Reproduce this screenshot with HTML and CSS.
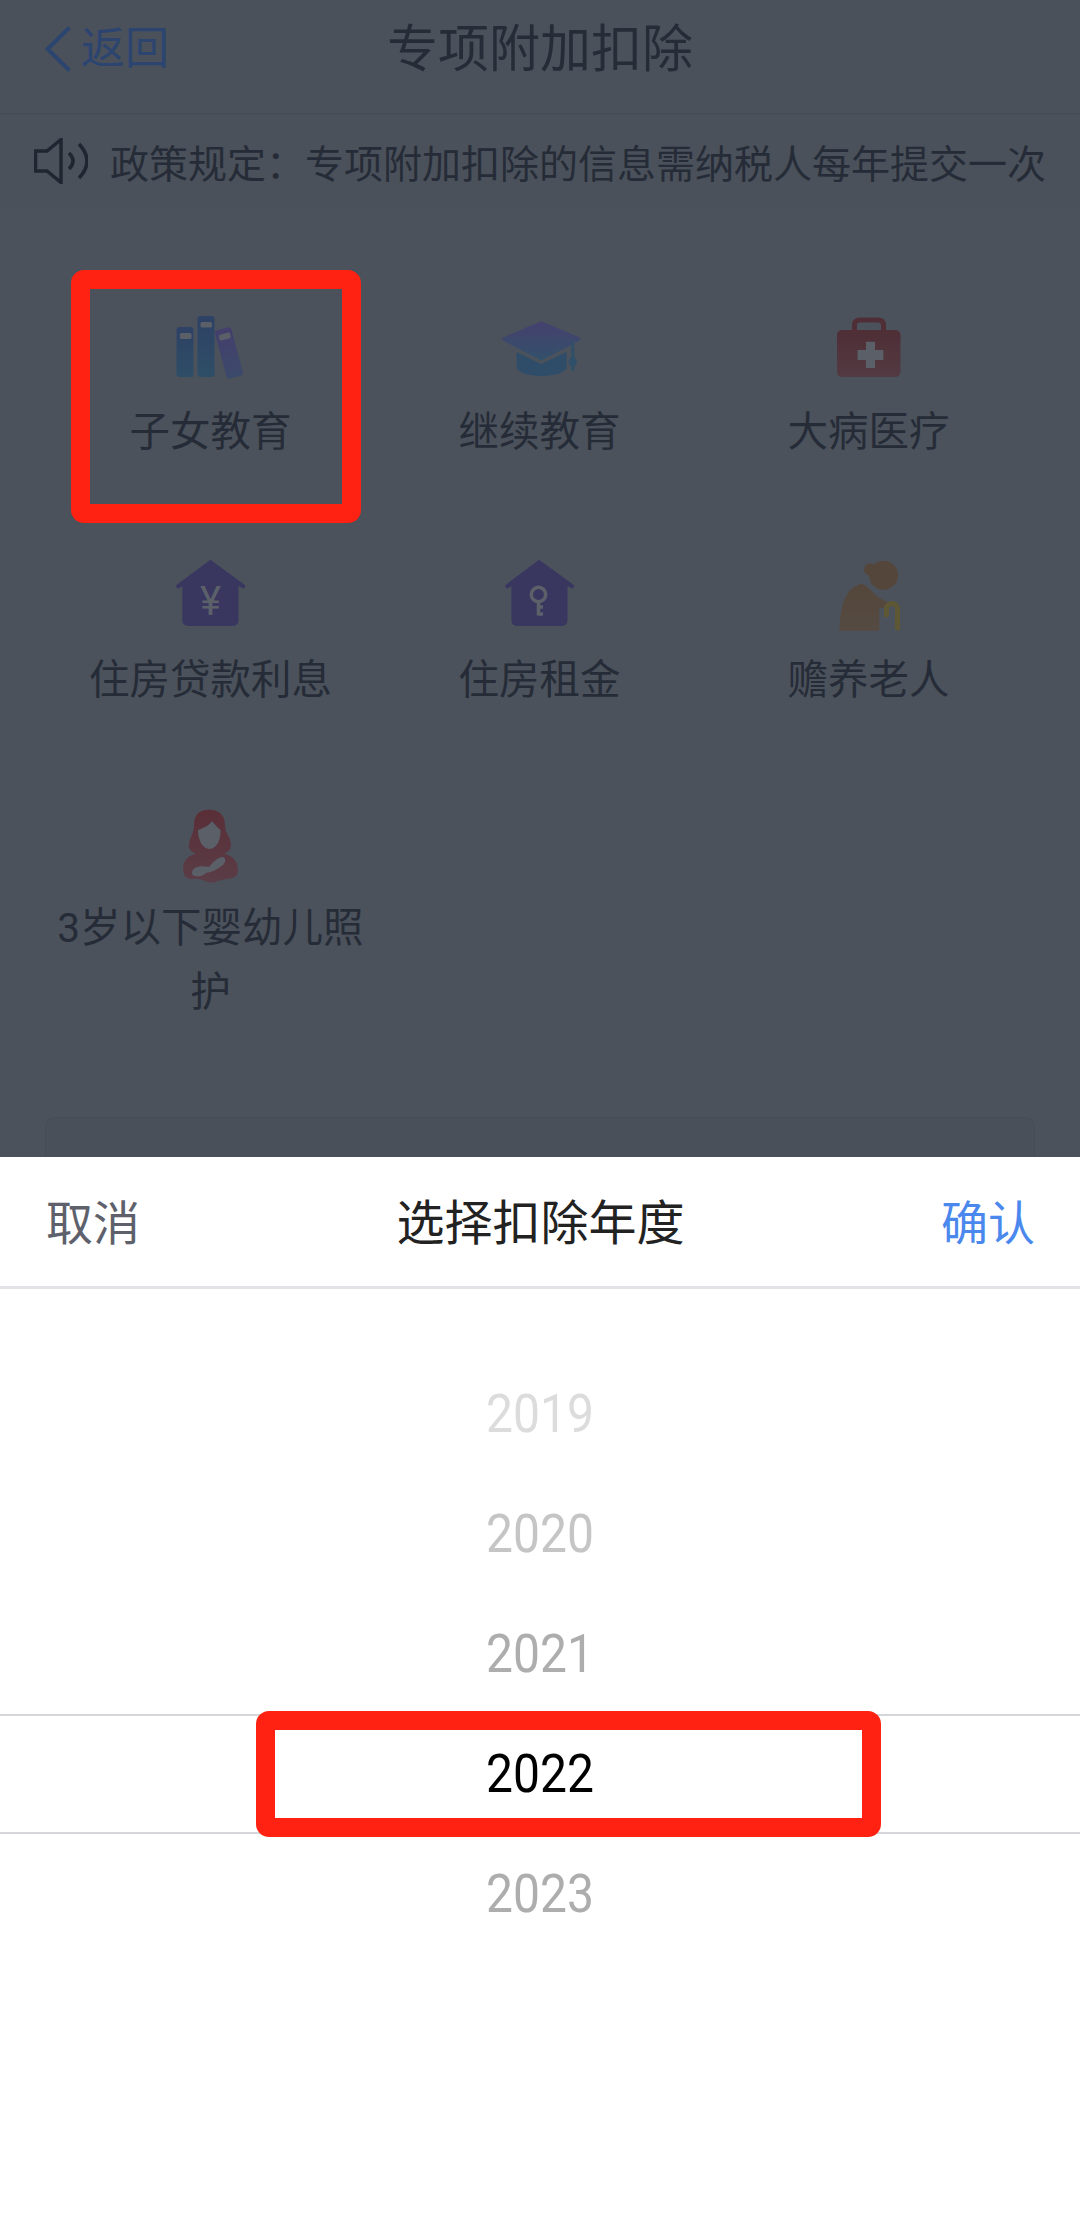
FILE: index.html
```html
<!DOCTYPE html>
<html lang="zh-CN">

<head>
    <meta charset="UTF-8">
    <meta name="viewport" content="width=device-width, initial-scale=1.0">
    <title>专项附加扣除</title>
    <link rel="stylesheet" href="styles.css">
</head>

<body>
    <div class="page">
        <div class="nav-bar">
            <div class="back">
                <svg class="back-icon" viewBox="0 0 26 46"><path d="M24.5 1.5 L2.5 23 L24.5 44.5"/></svg>
                <span>返回</span>
            </div>
            <div class="nav-title">专项附加扣除</div>
        </div>

        <div class="notice">
            <svg class="notice-icon" viewBox="0 0 54 46">
                <path d="M1.5 13 H13 L27 1.5 V44.5 L13 33 H1.5 Z"/>
                <path d="M35 15 Q43 23 35 31"/>
                <path d="M45 6 Q61 23 45 40"/>
            </svg>
            <span>政策规定：专项附加扣除的信息需纳税人每年提交一次</span>
        </div>

        <div class="item-grid">
            <div class="item">
                <svg class="item-icon" viewBox="0 0 84 76">
                    <defs>
                        <linearGradient id="blueGrad" x1="0" y1="0" x2="0" y2="1">
                            <stop offset="0" stop-color="#2e4166"/>
                            <stop offset="1" stop-color="#2e4e66"/>
                        </linearGradient>
                        <linearGradient id="purpleGrad" x1="0" y1="0" x2="0" y2="1">
                            <stop offset="0" stop-color="#443e6c"/>
                            <stop offset="1" stop-color="#3c4a6a"/>
                        </linearGradient>
                        <linearGradient id="capGrad" x1="0" y1="0" x2="0" y2="1">
                            <stop offset="0" stop-color="#46406f"/>
                            <stop offset="1" stop-color="#33516a"/>
                        </linearGradient>
                        <linearGradient id="redGrad" x1="0" y1="0" x2="0" y2="1">
                            <stop offset="0" stop-color="#4f2e36"/>
                            <stop offset="1" stop-color="#533a42"/>
                        </linearGradient>
                        <linearGradient id="momGrad" x1="0" y1="0" x2="0" y2="1">
                            <stop offset="0" stop-color="#5a2e37"/>
                            <stop offset="1" stop-color="#5a3d47"/>
                        </linearGradient>
                        <linearGradient id="brownGrad" x1="0" y1="0" x2="0" y2="1">
                            <stop offset="0" stop-color="#54463a"/>
                            <stop offset="1" stop-color="#554b43"/>
                        </linearGradient>
                    </defs>
                    <rect x="8.5" y="18" width="17" height="50" rx="3" fill="url(#blueGrad)"/>
                    <rect x="12" y="24" width="11.500" height="6" rx="1.500" class="cut"/>
                    <rect x="29.500" y="7" width="17" height="61" rx="3" fill="url(#blueGrad)"/>
                    <rect x="32.500" y="13" width="11.500" height="5.500" rx="1.500" class="cut"/>
                    <g transform="rotate(-15 61 44)">
                        <rect x="52.500" y="19" width="17" height="50" rx="3" fill="url(#purpleGrad)"/>
                        <rect x="55.500" y="24" width="11.500" height="6" rx="1.500" class="cut"/>
                    </g>
                </svg>
                <div class="item-label">子女教育</div>
            </div>

            <div class="item">
                <svg class="item-icon" viewBox="0 0 84 76">
                    <path d="M19.600 43 L44.200 55 L69.600 43 V58 C69.600 63 58 67 44.500 67 C31 67 19.600 63 19.600 58 Z" fill="#2f4d69"/>
                    <path d="M6 28.500 L43 12.700 Q44.200 12.200 45.400 12.700 L82.700 28.500 Q84 30 82.700 31.500 L45.400 51 Q44.200 51.800 43 51 L6 31.500 Q4.700 30 6 28.500 Z" fill="url(#capGrad)"/>
                    <path d="M75.700 33 V62" class="tassel"/>
                    <ellipse cx="75.700" cy="53" rx="4" ry="5" fill="#2f5068"/>
                </svg>
                <div class="item-label">继续教育</div>
            </div>

            <div class="item">
                <svg class="item-icon" viewBox="0 0 84 76">
                    <path d="M28.500 22 V16 Q28.500 11 34 11 H52 Q57.500 11 57.500 16 V22" class="handle"/>
                    <rect x="11" y="21" width="63.500" height="47" rx="5" fill="url(#redGrad)"/>
                    <path d="M40 32.700 H49 V41 H57.400 V51 H49 V59 H40 V51 H31.600 V41 H40 Z" class="cut"/>
                </svg>
                <div class="item-label">大病医疗</div>
            </div>

            <div class="item">
                <svg class="item-icon" viewBox="0 0 84 76">
                    <path d="M42.400 2.700 L76.800 28 Q78 31 75 31.500 L70.500 29 V63 Q70.500 69 64 69 H21 Q14.300 69 14.300 63 V29 L10.500 31.500 Q7.500 31 8.500 28 Z" fill="#393760"/>
                    <text x="42.400" y="58" class="yen">¥</text>
                </svg>
                <div class="item-label">住房贷款利息</div>
            </div>

            <div class="item">
                <svg class="item-icon" viewBox="0 0 84 76">
                    <path d="M42 2.700 L76.800 28 Q78 31 75 31.500 L70.500 29 V63 Q70.500 69 64 69 H21 Q14.400 69 14.400 63 V29 L10.500 31.500 Q7.500 31 8.500 28 Z" fill="#393760"/>
                    <ellipse cx="41.500" cy="37.500" rx="7.200" ry="7.200" class="key-ring"/>
                    <path d="M41.500 45 V58.500 M41.500 50 H46 M41.500 57 H46" class="key-stem"/>
                </svg>
                <div class="item-label">住房租金</div>
            </div>

            <div class="item">
                <svg class="item-icon" viewBox="0 0 84 76">
                    <circle cx="44" cy="12.500" r="6" fill="#54463a"/>
                    <circle cx="57.600" cy="18.300" r="14.500" fill="#54463a"/>
                    <path d="M13.500 73.700 C14 55 17 31 35 27 C41 27 47 37 55 42 L63 46 L63 51 L53.300 51 V73.700 Z" fill="url(#brownGrad)"/>
                    <path d="M60.500 58 V52 A5.500 5.500 0 0 1 71.500 52 V71" class="cane"/>
                </svg>
                <div class="item-label">赡养老人</div>
            </div>

            <div class="item">
                <svg class="item-icon" viewBox="0 0 84 76">
                    <path d="M41 4.700 C50 4.700 57 9 57 20 C57 29 63 32 63 40 C63 46 58 48 56 49 C64 50 70 56 70 65 C70 71 66 74 58 74 C52 75 47 78 41 77.500 C36 76 32 73 26 74 C19 75 15 71 15 64 C15 56 20 50 28 49 C24 47 20 45 21 39 C22 32 26 29 26 20 C26 9 32 4.700 41 4.700 Z" fill="url(#momGrad)"/>
                    <path d="M30 25 C36 23 42 20 44 16 C47 20 50 23 52.500 25 C53 34 49 44 41.500 44 C34 44 30 34 30 25 Z" class="cut"/>
                    <path d="M24 68 C24 63 31 60 41 62 C44 58 50 52 55 52 C58 53 58 57 55 60 C50 64 44 67 38 68 C35 72 24 73 24 68 Z" class="cut"/>
                </svg>
                <div class="item-label">3岁以下婴幼儿照护</div>
            </div>
        </div>

        <div class="tip-card"></div>

        <div class="mark mark-item"></div>

        <div class="sheet">
            <div class="sheet-head">
                <span class="sheet-cancel">取消</span>
                <span class="sheet-title">选择扣除年度</span>
                <span class="sheet-ok">确认</span>
            </div>
            <div class="year-list">
                <div class="year year-far"><span>2019</span></div>
                <div class="year year-mid"><span>2020</span></div>
                <div class="year year-near"><span>2021</span></div>
                <div class="year year-current"><span>2022</span></div>
                <div class="year year-near"><span>2023</span></div>
            </div>
        </div>

        <div class="mark mark-year"></div>
    </div>
</body>

</html>
```

FILE: styles.css
```css
body, html {
    margin: 0;
    padding: 0;
    width: 100%;
    height: 100%;
    overflow: hidden;
    font-family: Roboto, "Noto Sans CJK SC", sans-serif;
}

.page {
    position: relative;
    width: 1080px;
    height: 2223px;
    overflow: hidden;
    background: #4b525c;
    color: #262c37;
}

.nav-bar {
    position: relative;
    display: flex;
    align-items: center;
    justify-content: center;
    box-sizing: border-box;
    height: 115px;
    padding-bottom: 14px;
    background: #4a515b;
    border-bottom: 2px solid #464d57;
}

.back {
    position: absolute;
    left: 45px;
    top: 26px;
    display: flex;
    align-items: center;
    gap: 10px;
    font-size: 44px;
    line-height: 46px;
    color: #2c4470;
}

.back-icon {
    width: 26px;
    height: 46px;
}

.back-icon path {
    fill: none;
    stroke: #2c4470;
    stroke-width: 4;
}

.nav-title {
    font-size: 51px;
    line-height: 60px;
}

.notice {
    display: flex;
    align-items: center;
    gap: 22px;
    height: 92px;
    padding-left: 34px;
    font-size: 39px;
    white-space: nowrap;
    background: #4a515b;
}

.notice-icon {
    width: 54px;
    height: 46px;
    flex: none;
}

.notice-icon path {
    fill: none;
    stroke: #1f2631;
    stroke-width: 3.500;
}

.item-grid {
    display: grid;
    grid-template-columns: repeat(3, 329px);
    margin-top: 64px;
    padding: 0 46px;
}

.item {
    display: flex;
    flex-direction: column;
    align-items: center;
    padding: 38px 0 55px;
}

.item-icon {
    width: 84px;
    height: 76px;
    margin: 0 2px 15px 0;
    overflow: visible;
}

.item-label {
    font-size: 40.500px;
    line-height: 64px;
    text-align: center;
}

.cut {
    fill: #5a5f68;
}

.tassel {
    fill: none;
    stroke: #2f5068;
    stroke-width: 3;
}

.handle {
    fill: none;
    stroke: #4f2e36;
    stroke-width: 5;
}

.yen {
    fill: #5b6069;
    font-size: 40px;
    text-anchor: middle;
}

.key-ring {
    fill: none;
    stroke: #5b6069;
    stroke-width: 3.500;
}

.key-stem {
    fill: none;
    stroke: #5b6069;
    stroke-width: 3.500;
}

.cane {
    fill: none;
    stroke: #5e5733;
    stroke-width: 5;
    stroke-linecap: round;
}

.tip-card {
    box-sizing: border-box;
    height: 120px;
    margin: 38px 45px 0;
    border: 1px solid #474d57;
    border-radius: 10px;
    background: #4a505a;
}

.sheet {
    position: absolute;
    left: 0;
    right: 0;
    top: 1157px;
    bottom: 0;
    background: #fff;
}

.sheet-head {
    display: flex;
    align-items: center;
    justify-content: space-between;
    box-sizing: border-box;
    height: 132px;
    padding: 0 45px 5px 46px;
    border-bottom: 3px solid #e2e3e6;
    font-size: 47px;
}

.sheet-cancel {
    color: #5e616c;
}

.sheet-title {
    color: #222;
    font-size: 48px;
}

.sheet-ok {
    color: #4a88ee;
}

.year-list {
    padding-top: 65px;
}

.year {
    box-sizing: border-box;
    height: 120px;
    font-size: 48px;
    line-height: 120px;
    text-align: center;
}

/* digits in the shot are a bit taller than Roboto */
.year span {
    display: inline-block;
    transform: scaleY(1.1);
}

.year-far {
    color: #dcdcdc;
}

.year-mid {
    color: #c5c5c5;
}

.year-near {
    color: #adadad;
}

.year-current {
    color: #000;
    line-height: 116px;
    border-top: 2px solid #d5d6d9;
    border-bottom: 2px solid #d5d6d9;
}

/* red annotation boxes drawn over the screenshot */
.mark {
    position: absolute;
    box-sizing: border-box;
    border-style: solid;
    border-color: #ff2212;
    border-radius: 13px;
}

.mark-item {
    left: 71px;
    top: 270px;
    width: 290px;
    height: 253px;
    border-width: 19px;
}

.mark-year {
    left: 256px;
    top: 1711px;
    width: 625px;
    height: 126px;
    border-width: 19px;
}
```
